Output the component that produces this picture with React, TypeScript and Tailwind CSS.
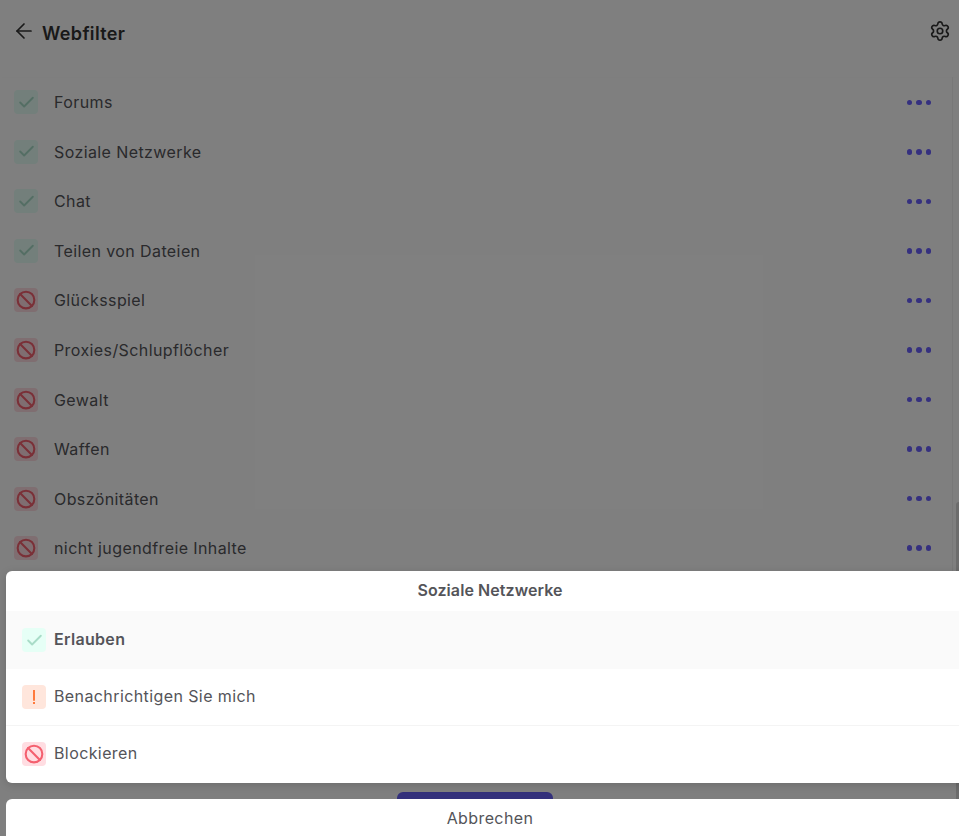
import { ArrowLeft, Ban, Check, Settings } from "lucide-react";

const rows: [string, boolean][] = [
  ["Forums", true],
  ["Soziale Netzwerke", true],
  ["Chat", true],
  ["Teilen von Dateien", true],
  ["Glücksspiel", false],
  ["Proxies/Schlupflöcher", false],
  ["Gewalt", false],
  ["Waffen", false],
  ["Obszönitäten", false],
  ["nicht jugendfreie Inhalte", false],
];

function StatusIcon({ kind }: { kind: "ok" | "warn" | "block" }) {
  if (kind === "ok")
    return (
      <span className="flex h-6 w-6 shrink-0 items-center justify-center rounded bg-[#e6fff6]">
        <Check size={19} strokeWidth={2.4} className="text-[#a9dcc8]" />
      </span>
    );
  if (kind === "warn")
    return (
      <span className="flex h-6 w-6 shrink-0 items-center justify-center rounded bg-[#ffe6dc]">
        <svg width="18" height="18" viewBox="0 0 18 18" fill="none" stroke="#ff7a3d" strokeWidth="2">
          <path d="M9 2V12.7" />
          <path d="M9 14V16" />
        </svg>
      </span>
    );
  return (
    <span className="flex h-6 w-6 shrink-0 items-center justify-center rounded bg-[#ffdde2]">
      <Ban size={20} strokeWidth={2.5} className="text-[#f4606f]" />
    </span>
  );
}

function Dot() {
  return <i className="h-[5.5px] w-[5.5px] rounded-full bg-[#6a60ff]" />;
}

export default function App() {
  return (
    <div className="relative h-[836px] w-[959px] overflow-hidden bg-white font-['Inter',sans-serif] text-[16px] tracking-[0.025em] text-[#545459]">
      <header className="flex h-[77px] items-start justify-between pl-[12px] pr-[8px] pt-[19px] shadow-[0_1px_4px_rgba(0,0,0,0.015)]">
        <div className="flex items-start gap-[6px]">
          <ArrowLeft size={24} strokeWidth={1.7} className="text-[#333]" />
          <span className="mt-[3px] text-[18px] font-semibold leading-[24px] tracking-[0.02em] text-[#333]">Webfilter</span>
        </div>
        <Settings size={22} strokeWidth={1.8} className="mt-px text-[#333]" />
      </header>

      <ul className="h-[703px] w-[953px] border-r border-[#f0f0f0] pt-[0.5px]">
        {rows.map(([label, ok]) => (
          <li key={label} className="flex h-[49.55px] items-center gap-4 pl-[14px] pr-[21px]">
            <StatusIcon kind={ok ? "ok" : "block"} />
            <span className="flex-1">{label}</span>
            <span className="flex gap-[4px]">
              <Dot />
              <Dot />
              <Dot />
            </span>
          </li>
        ))}
      </ul>

      <div className="ml-[397px] mt-[12px] h-[44px] w-[156px] rounded-md bg-[#6660f6]" />

      <div className="absolute right-0 top-[502px] h-[300px] w-[3px] rounded-tl bg-[#d8d8d8]" />

      <div className="absolute inset-0 bg-black/50" />

      <div className="absolute left-[6px] top-[571px] w-[968px] overflow-hidden rounded-md bg-white shadow-[0_2px_8px_rgba(0,0,0,0.15)]">
        <div className="flex h-[40px] items-center justify-center pb-[2px] text-[16px] font-semibold tracking-[0.005em]">Soziale Netzwerke</div>
        <div className="flex h-[58px] items-center gap-2 bg-[#fafafa] pl-4">
          <StatusIcon kind="ok" />
          <span className="pb-[2px] font-semibold tracking-[0.02em]">Erlauben</span>
        </div>
        <div className="flex h-[57px] items-center gap-2 border-b border-[#f4f4f4] pl-4">
          <StatusIcon kind="warn" />
          <span className="pb-[2px]">Benachrichtigen Sie mich</span>
        </div>
        <div className="flex h-[57px] items-center gap-2 pb-[1px] pl-4">
          <StatusIcon kind="block" />
          <span className="pb-[2px]">Blockieren</span>
        </div>
      </div>

      <div className="absolute left-[6px] top-[799px] flex h-[60px] w-[968px] justify-center rounded-md bg-white pt-[7px] leading-[24px]">
        Abbrechen
      </div>
    </div>
  );
}
